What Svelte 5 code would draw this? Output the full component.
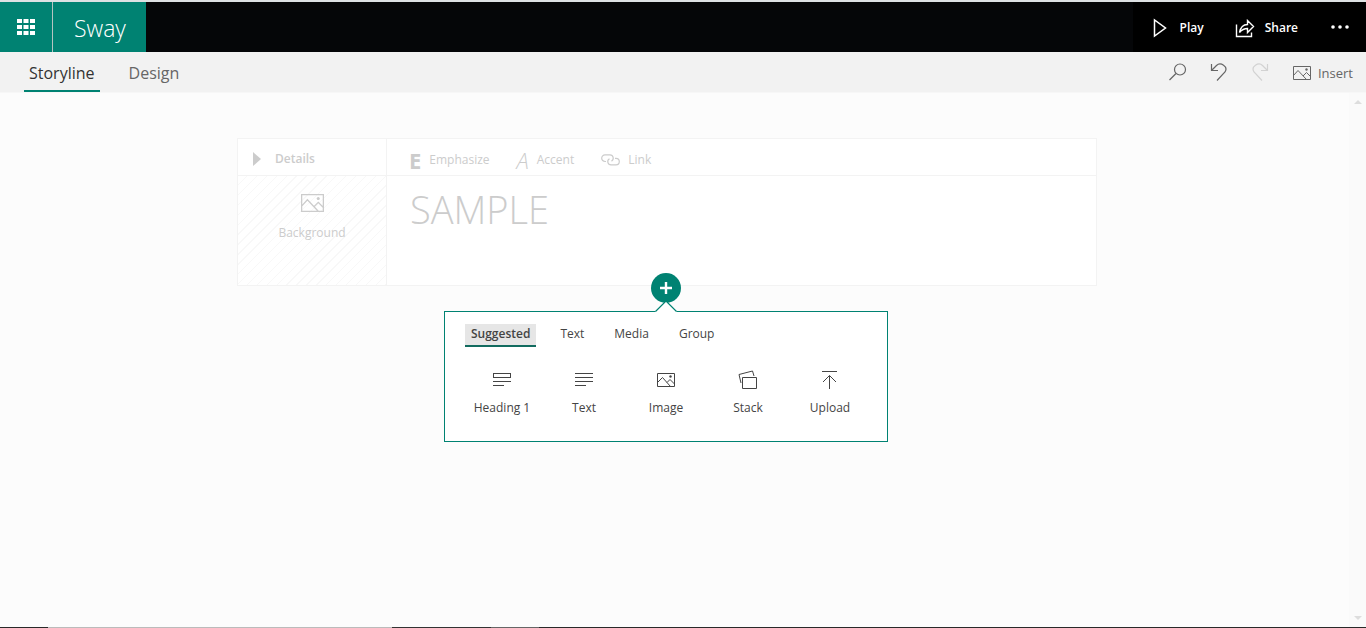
<script>
  let view = $state('Storyline');
  let category = $state('Suggested');
  let title = $state('SAMPLE');
  const views = ['Storyline', 'Design'];
  const categories = ['Suggested', 'Text', 'Media', 'Group'];
  const cards = ['Heading 1', 'Text', 'Image', 'Stack', 'Upload'];
</script>

{#snippet picture(w, h)}
  <svg width={w} height={h} viewBox="0 0 18 14" fill="none" stroke="currentColor" aria-hidden="true">
    <path d="M.5 .5h17v13H.5zM.5 9.5l4.5-5 8.5 9M10 10l3.5-3.500 4 4" />
    <circle cx="13.500" cy="3.500" r="1.200" fill="currentColor" stroke="none" />
  </svg>
{/snippet}

<div class="page">
  <header>
    <button class="waffle" aria-label="App launcher">
      <svg width="18" height="16" viewBox="0 0 18 16" fill="#fff" aria-hidden="true">
        {#each [0, 6, 12] as y}
          {#each [0, 6.5, 13] as x}
            <rect {x} {y} width="5" height="4" />
          {/each}
        {/each}
      </svg>
    </button>
    <a class="brand" href="#home">Sway</a>
    <div class="actions">
      <button class="play">
        <svg width="14" height="20" viewBox="0 0 14 20" fill="none" stroke="#fff" stroke-width="1.500" aria-hidden="true"><path d="M1.500 2v16l11-8z" /></svg>
        Play
      </button>
      <button class="share">
        <svg width="20" height="19" viewBox="0 0 20 19" fill="none" stroke="#fff" stroke-width="1.400" aria-hidden="true">
          <path d="M1.500 5.500v12h15v-4" />
          <path d="M4.500 13.500C5.500 8.500 8.500 5.500 12.500 5.500V1.500l6 6-6 6V9.500c-3 0-5.500 1-8 4z" />
        </svg>
        Share
      </button>
      <button class="more" aria-label="More options">
        <svg width="18" height="4" viewBox="0 0 18 4" fill="#fff" aria-hidden="true"><circle cx="2" cy="2" r="1.800" /><circle cx="9" cy="2" r="1.800" /><circle cx="16" cy="2" r="1.800" /></svg>
      </button>
    </div>
  </header>

  <nav>
    <div class="views">
      {#each views as name}
        <button class:active={view === name} onclick={() => (view = name)}>{name}</button>
      {/each}
    </div>
    <div class="tools">
      <button aria-label="Search">
        <svg width="18" height="18" viewBox="0 0 18 18" fill="none" stroke="currentColor" stroke-width="1.200" aria-hidden="true"><circle cx="11" cy="6.500" r="5.500" /><path d="M7 10.500L.5 17" /></svg>
      </button>
      <button aria-label="Undo">
        <svg width="18" height="18" viewBox="0 0 18 18" fill="none" stroke="currentColor" stroke-width="1.200" aria-hidden="true"><path d="M1.500 1v6.500H8M1.500 7.500l5-5c4-4 12 1 8.500 6.500l-8 8.500" /></svg>
      </button>
      <button aria-label="Redo" disabled>
        <svg width="18" height="18" viewBox="0 0 18 18" fill="none" stroke="currentColor" stroke-width="1.200" aria-hidden="true"><path d="M16.500 1v6.500H10M16.500 7.500l-5-5C7.500-1.500-.5 3.500 3 9l8 8.500" /></svg>
      </button>
      <button class="insert">{@render picture(18, 14)}Insert</button>
    </div>
  </nav>

  <main>
    <section class="card">
      <aside>
        <button class="details">
          <svg width="8" height="14" viewBox="0 0 8 14" fill="currentColor" aria-hidden="true"><path d="M0 0l8 7-8 7z" /></svg>
          Details
        </button>
        <button class="background">{@render picture(23, 18)}Background</button>
      </aside>
      <div class="editor">
        <div class="format">
          <button><b>E</b>Emphasize</button>
          <button><i>A</i>Accent</button>
          <button>
            <svg width="19" height="12" viewBox="0 0 19 12" fill="none" stroke="currentColor" stroke-width="1.200" aria-hidden="true">
              <path d="M5 7.500H4a3.300 3.300 0 0 1 0-6.600h5a3.300 3.300 0 0 1 1.500 6.200" />
              <path d="M14 4.300h1a3.300 3.300 0 0 1 0 6.600h-5a3.300 3.300 0 0 1-1.500-6.200" />
            </svg>
            Link
          </button>
        </div>
        <input aria-label="Title" bind:value={title} />
      </div>
    </section>

    <div class="adder">
      <button class="plus" aria-label="Add card">
        <svg width="14" height="14" viewBox="0 0 14 14" stroke="#fff" stroke-width="2.400" aria-hidden="true"><path d="M7 1v12M1 7h12" /></svg>
      </button>
      <svg class="pointer" width="22" height="11" viewBox="0 0 22 11" fill="#fff" aria-hidden="true"><path d="M0 11L11 0l11 11z" /><path d="M.5 10.500L11 0l10.500 10.500" fill="none" stroke="#008272" stroke-width="1.200" /></svg>
      <div class="menu">
        <div class="categories">
          {#each categories as name}
            <button class:active={category === name} onclick={() => (category = name)}>{name}</button>
          {/each}
        </div>
        <div class="choices">
          {#each cards as name}
            <button>
              <svg width="20" height="20" viewBox="0 0 20 20" fill="none" stroke="currentColor" aria-hidden="true">
                {#if name === 'Heading 1'}
                  <path d="M1 3.500h18M1 7.500h18M1.500 3v5M18.500 3v5M1 11.500h18M1 15.500h11" />
                {:else if name === 'Text'}
                  <path d="M1 3.500h18M1 7.500h18M1 11.500h18M1 15.500h11" />
                {:else if name === 'Image'}
                  <path d="M1.500 3.500h17v13h-17zM1.500 12.500l5-5 8 9M11 12.500l3-3 4.500 4.500" />
                  <circle cx="14.500" cy="6.500" r="1.200" fill="currentColor" stroke="none" />
                {:else if name === 'Stack'}
                  <path d="M4.500 7.500h14v11h-14zM3 13L1 4.500 14.500 1l1.500 5" />
                {:else}
                  <path d="M2 1.500h15M9.500 19V5.500M3 12l6.500-6.500L16 12" />
                {/if}
              </svg>
              {name}
            </button>
          {/each}
        </div>
      </div>
    </div>
    <div class="scrollbar" aria-hidden="true">
      <svg width="8" height="4" viewBox="0 0 8 4"><path d="M0 4l4-4 4 4z" fill="#ddd" /></svg>
      <svg width="8" height="4" viewBox="0 0 8 4"><path d="M0 0l4 4 4-4z" fill="#ddd" /></svg>
    </div>
  </main>
  <footer></footer>
</div>

<style>
  :global(body) { margin: 0; }
  * { box-sizing: border-box; }
  .page {
    min-height: 100vh;
    display: flex;
    flex-direction: column;
    background: #fcfcfc;
    font: 12px/16px "Open Sans", "Noto Sans", sans-serif;
    color: #444;
  }
  svg { display: block; flex: none; }
  button {
    font: inherit;
    color: inherit;
    background: none;
    border: 0;
    padding: 0;
    display: flex;
    align-items: center;
  }
  header {
    display: flex;
    height: 52px;
    border-top: 2px solid #dde1e3;
    background: #050608;
    color: #fff;
  }
  .waffle {
    width: 53px;
    justify-content: center;
    background: #008272;
    border-right: 1px solid #b5c4c1;
  }
  .brand {
    display: flex;
    align-items: center;
    padding: 2px 20px 0 21px;
    background: #008272;
    color: #fff;
    font-size: 23px;
    line-height: 32px;
    font-weight: 300;
    text-decoration: none;
  }
  .actions {
    display: flex;
    margin-left: auto;
    padding: 0 17px 0 20px;
    background: #000;
    font-weight: 600;
  }
  .play, .share { padding-top: 2px; }
  .play { gap: 13px; }
  .share { gap: 10px; margin-left: 31px; }
  .more { margin-left: 33px; }
  nav {
    display: flex;
    justify-content: space-between;
    height: 41px;
    padding: 0 13px 0 24px;
    background: #f2f2f2;
    border-bottom: 1px solid #f7f7f7;
    color: #666;
  }
  .views { display: flex; gap: 24px; }
  .views button {
    padding: 4px 5px 0;
    border-bottom: 2px solid transparent;
    font-size: 16px;
    line-height: 24px;
  }
  .views .active { border-color: #008272; color: #333; }
  .tools { display: flex; gap: 23px; font-size: 13px; }
  .tools button:disabled { color: #d2d2d2; }
  .tools .insert { gap: 7px; margin-left: 1px; padding-top: 2px; }
  main {
    position: relative;
    flex: 1;
    padding: 45px 32px 0 0;
  }
  .card {
    display: flex;
    width: 80%;
    max-width: 860px;
    min-width: 520px;
    min-height: 148px;
    margin: 0 auto;
    border: 1px solid #f3f3f3;
    background: #fff;
    color: #ccc;
  }
  aside {
    flex: none;
    display: flex;
    flex-direction: column;
    width: 149px;
    border-right: 1px solid #f3f3f3;
  }
  .details {
    height: 37px;
    padding: 3px 0 0 15px;
    gap: 14px;
    border-bottom: 1px solid #f3f3f3;
    font-weight: 600;
  }
  .background {
    flex: 1;
    flex-direction: column;
    gap: 13px;
    padding-top: 18px;
    background: repeating-linear-gradient(135deg, #fff 0 6px, #f8f8f8 6px 7px);
  }
  .editor { flex: 1; min-width: 0; }
  .format {
    display: flex;
    gap: 27px;
    height: 37px;
    padding: 6px 0 0 22px;
    border-bottom: 1px solid #f3f3f3;
  }
  .format button { gap: 8px; }
  .format b, .format i { font-size: 22px; }
  .format i { font-weight: 300; }
  input {
    display: block;
    width: 100%;
    height: 66px;
    padding: 0 23px;
    border: 0;
    outline: 0;
    background: none;
    color: #ccc;
    font: 300 38px/52px "Open Sans", "Noto Sans", sans-serif;
  }
  .adder {
    display: flex;
    flex-direction: column;
    align-items: center;
    margin-top: -13px;
    padding-right: 2px;
    position: relative;
  }
  .plus {
    width: 30px;
    height: 30px;
    justify-content: center;
    border-radius: 50%;
    background: #008272;
  }
  .pointer { margin: -2px 0 -1px; position: relative; }
  .menu {
    width: 444px;
    border: 1px solid #008272;
    background: #fff;
    padding: 12px 16px 25px;
  }
  .categories { display: flex; gap: 18px; padding-left: 4px; }
  .categories button { padding: 0 6px 1px; height: 23px; border-bottom: 2px solid transparent; }
  .categories .active { background: #e6e6e6; border-color: #126b5f; font-weight: 600; }
  .choices { display: grid; grid-template-columns: repeat(5, 1fr); padding-top: 23px; }
  .choices button { flex-direction: column; gap: 10px; }
  .scrollbar {
    position: absolute;
    inset: 0 0 0 auto;
    width: 17px;
    padding: 7px 4px 7px 5px;
    display: flex;
    flex-direction: column;
    justify-content: space-between;
    background: #fafafa;
  }
  footer {
    height: 1px;
    background: linear-gradient(90deg, #292929 48px, #bbb 48px 392px, #333 392px 491px, #666 491px 539px, #292929 539px);
  }
</style>
